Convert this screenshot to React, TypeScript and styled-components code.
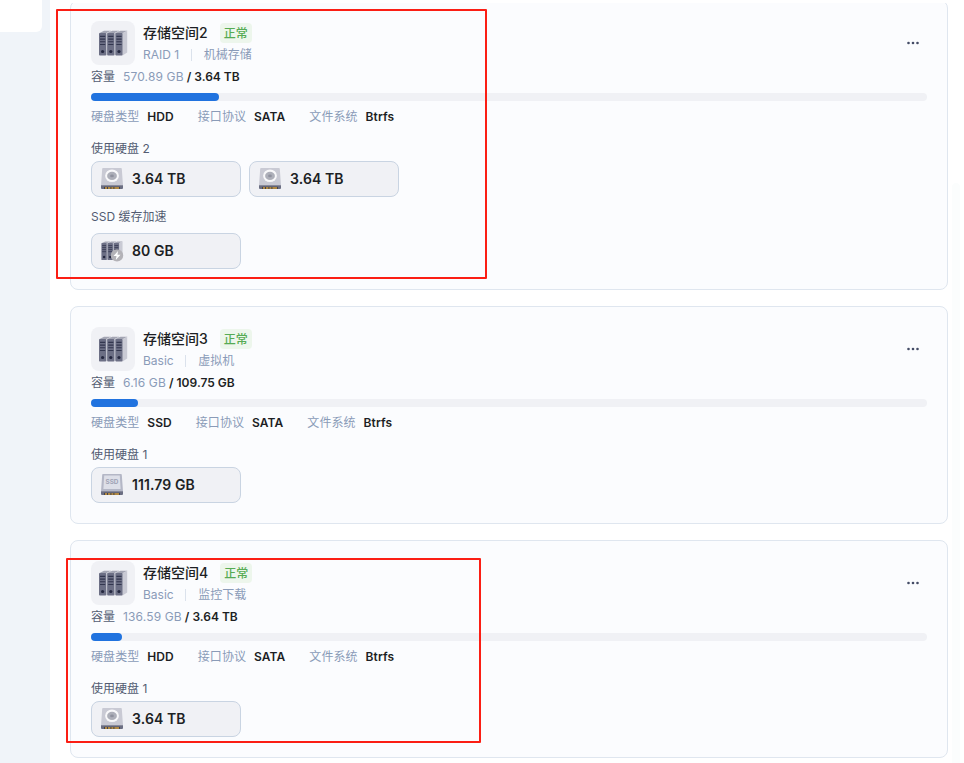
import styled, { createGlobalStyle } from "styled-components";

const GlobalStyle = createGlobalStyle`
  * {
    box-sizing: border-box;
  }
  body {
    margin: 0;
    background-color: #ffffff;
    color: #1d1f24;
    font-family: Inter, "Noto Sans CJK SC", sans-serif;
    font-size: 12px;
    overflow: hidden;
  }
`;

const Page = styled.div`
  position: relative;
  display: flex;
  width: 964px;
  height: 763px;
  overflow: hidden;
`;

const Sidebar = styled.aside`
  width: 50px;
  background-color: #f0f4f9;
`;

const ActiveItem = styled.div`
  width: 42px;
  height: 32px;
  background-color: #ffffff;
  border-bottom-right-radius: 6px;
`;

const Content = styled.main`
  width: 902px;
  margin-top: 3px;
  padding: 0 4px 0 20px;
  overflow: hidden;
`;

const List = styled.div`
  display: flex;
  flex-direction: column;
  gap: 16px;
  margin-top: -3px;
`;

const Gutter = styled.div`
  width: 8px;
  margin-top: 183px;
  border-radius: 4px 4px 0 0;
  background-color: #fbfdfd;
`;

const Card = styled.section`
  padding: 20px;
  border: 1px solid #dfe6ef;
  border-radius: 8px;
  background-color: #fbfcfe;
`;

const Header = styled.header`
  display: flex;
  height: 44px;
`;

const IconBox = styled.div`
  display: flex;
  align-items: center;
  justify-content: center;
  width: 44px;
  height: 44px;
  margin-right: 8px;
  border-radius: 8px;
  background-color: #f0f1f5;
`;

const Heading = styled.div`
  flex: 1;
`;

const TitleRow = styled.div`
  display: flex;
  align-items: center;
  height: 24px;
`;

const Title = styled.h3`
  margin: 0 12px 0 0;
  font-size: 14px;
  font-weight: 500;
  line-height: 24px;
`;

const Badge = styled.span`
  height: 20px;
  padding: 1px 4px 0;
  border-radius: 4px;
  background-color: #edf6ec;
  color: #56ab54;
  font-weight: 500;
  line-height: 19px;
`;

const SubRow = styled.div`
  display: flex;
  align-items: center;
  height: 20px;
  color: #8a9bb8;
  line-height: 20px;
`;

const SubText = styled.span`
  height: 20px;
  line-height: 19px;
`;

const Divider = styled.i`
  width: 1px;
  height: 12px;
  margin: 0 12px 0 11.6px;
  background-color: #dbe2ec;
`;

const MoreBtn = styled.button`
  display: flex;
  align-items: center;
  justify-content: center;
  width: 28px;
  height: 44px;
  padding: 0;
  border: none;
  background: none;
`;

const Capacity = styled.div`
  height: 24px;
  color: #535c72;
  line-height: 23px;
`;

const Used = styled.span`
  margin: 0 3px 0 8px;
  color: #8a9bb8;
  letter-spacing: 0.14px;
`;

const Strong = styled.span`
  color: #1d1f24;
  font-weight: 600;
`;

const Bar = styled.div`
  height: 8px;
  margin: 4px 0;
  border-radius: 4px;
  background-color: #f0f1f5;
`;

const BarFill = styled.div`
  height: 8px;
  border-radius: 4px;
  background-color: #2173df;
`;

const MetaRow = styled.div`
  display: flex;
  gap: 24px;
  height: 24px;
  letter-spacing: 0.07px;
  line-height: 23px;
`;

const Meta = styled.span`
  display: flex;
  gap: 8px;
  color: #8a9bb8;
`;

const Label = styled.div`
  margin-top: 8px;
  color: #535c72;
  line-height: 24px;
`;

const Chips = styled.div<{ $top?: number }>`
  display: flex;
  gap: 8px;
  margin-top: ${(props) => props.$top ?? 0}px;
`;

const Chip = styled.div`
  display: flex;
  align-items: center;
  gap: 8px;
  width: 150px;
  height: 36px;
  padding: 0 8px;
  border: 1px solid #c9d4e2;
  border-radius: 8px;
  background-color: #f0f1f5;
`;

const Size = styled.span`
  height: 24px;
  font-size: 14px;
  font-weight: 600;
  letter-spacing: 0.1px;
  line-height: 23px;
`;

const Mark = styled.div<{ $x: number; $y: number; $w: number; $h: number }>`
  position: absolute;
  left: ${(props) => props.$x}px;
  top: ${(props) => props.$y}px;
  width: ${(props) => props.$w}px;
  height: ${(props) => props.$h}px;
  border: 2px solid #fb1e14;
  border-radius: 1px;
  pointer-events: none;
`;

function Towers() {
  return (
    <>
      {[0, 8.2, 16.4].map((x) => (
        <g key={x} transform={`translate(${x} 0)`}>
          <path d="M0 3.2 5 .8h7L7.2 3.2z" fill="#a3a5b3" />
          <path d="M7.2 3.2 11.8.8v21.6L7.2 25.6z" fill="#c9cad4" />
          <rect y="3" width="7.2" height="22.6" rx=".8" fill="#6c6f85" />
          <path
            d="M1 6.4h5.2M1 9.1h5.2M1 11.8h5.2M1 14.5h5.2"
            stroke="#33374f"
            strokeWidth="1.1"
          />
          <circle cx="3.6" cy="21.5" r="1.6" fill="#24273f" />
        </g>
      ))}
    </>
  );
}

function PoolIcon() {
  return (
    <svg width="29" height="27" viewBox="0 0 29 27">
      <Towers />
    </svg>
  );
}

function DiskIcon({ type }: { type: string }) {
  if (type === "cache") {
    return (
      <svg width="24" height="24" viewBox="0 0 24 24">
        <g transform="translate(1.4 1.8) scale(.75)">
          <Towers />
        </g>
        <circle cx="17" cy="16.4" r="6.2" fill="#b3b2b7" />
        <path d="m18 11.9-4.5 5.2h3l-.7 4 4.7-5.4h-3z" fill="#ffffff" />
      </svg>
    );
  }
  return (
    <svg width="24" height="24" viewBox="0 0 24 24">
      <path
        d="M3 1h18a.8.8 0 0 1 .8.7L23 18.4H1L2.2 1.7A.8.8 0 0 1 3 1z"
        fill={type === "ssd" ? "#b4b7c6" : "#c9cad4"}
      />
      <path d="M1 18.2h22V21a1 1 0 0 1-1 1H2a1 1 0 0 1-1-1z" fill="#6b6e82" />
      <path d="M4 19.8h16V22H4z" fill="#45434c" />
      <path
        d="M5 21h2M8 21h2.4M11.4 21h2M14.4 21H19"
        stroke="#d3a03f"
        strokeWidth="1.5"
      />
      {type === "ssd" ? (
        <>
          <path d="M4.2 2.6h15.6l.8 13.4H3.4z" fill="#dddfe8" />
          <text
            x="12"
            y="11.4"
            fill="#a0a3b5"
            fontSize="6.4"
            fontWeight="700"
            textAnchor="middle"
          >
            SSD
          </text>
        </>
      ) : (
        <>
          <ellipse cx="12" cy="8.8" rx="6.9" ry="6.3" fill="#f8f8fa" />
          <ellipse cx="12" cy="8.9" rx="4.9" ry="4.1" fill="#adafb9" />
          <ellipse cx="12" cy="8.9" rx="1.9" ry="1.4" fill="#8f919e" />
        </>
      )}
    </svg>
  );
}

const pools = [
  {
    name: "存储空间2",
    raid: "RAID 1",
    note: "机械存储",
    used: "570.89 GB",
    total: "3.64 TB",
    fill: 128,
    media: "HDD",
    disks: ["3.64 TB", "3.64 TB"],
    cache: "80 GB",
  },
  {
    name: "存储空间3",
    raid: "Basic",
    note: "虚拟机",
    used: "6.16 GB",
    total: "109.75 GB",
    fill: 47,
    media: "SSD",
    disks: ["111.79 GB"],
  },
  {
    name: "存储空间4",
    raid: "Basic",
    note: "监控下载",
    used: "136.59 GB",
    total: "3.64 TB",
    fill: 31,
    media: "HDD",
    disks: ["3.64 TB"],
  },
];

function Pool({ pool }: { pool: (typeof pools)[number] }) {
  return (
    <Card>
      <Header>
        <IconBox>
          <PoolIcon />
        </IconBox>
        <Heading>
          <TitleRow>
            <Title>{pool.name}</Title>
            <Badge>正常</Badge>
          </TitleRow>
          <SubRow>
            <SubText>{pool.raid}</SubText>
            <Divider />
            <SubText>{pool.note}</SubText>
          </SubRow>
        </Heading>
        <MoreBtn>
          <svg width="12" height="4" viewBox="0 0 12 4" fill="#444c66">
            <circle cx="1.5" cy="2" r="1.3" />
            <circle cx="6" cy="2" r="1.3" />
            <circle cx="10.5" cy="2" r="1.3" />
          </svg>
        </MoreBtn>
      </Header>
      <Capacity>
        容量<Used>{pool.used}</Used>
        <Strong>/ {pool.total}</Strong>
      </Capacity>
      <Bar>
        <BarFill style={{ width: pool.fill }} />
      </Bar>
      <MetaRow>
        <Meta>
          硬盘类型<Strong>{pool.media}</Strong>
        </Meta>
        <Meta>
          接口协议<Strong>SATA</Strong>
        </Meta>
        <Meta>
          文件系统<Strong>Btrfs</Strong>
        </Meta>
      </MetaRow>
      <Label>使用硬盘 {pool.disks.length}</Label>
      <Chips>
        {pool.disks.map((size, i) => (
          <Chip key={i}>
            <DiskIcon type={pool.media.toLowerCase()} />
            <Size>{size}</Size>
          </Chip>
        ))}
      </Chips>
      {pool.cache && (
        <>
          <Label>SSD 缓存加速</Label>
          <Chips $top={4}>
            <Chip>
              <DiskIcon type="cache" />
              <Size>{pool.cache}</Size>
            </Chip>
          </Chips>
        </>
      )}
    </Card>
  );
}

function App() {
  return (
    <Page>
      <GlobalStyle />
      <Sidebar>
        <ActiveItem />
      </Sidebar>
      <Content>
        <List>
          {pools.map((pool) => (
            <Pool key={pool.name} pool={pool} />
          ))}
        </List>
      </Content>
      <Gutter />
      <Mark $x={56} $y={9} $w={431} $h={270} />
      <Mark $x={66} $y={558} $w={415} $h={185} />
    </Page>
  );
}

export default App;
